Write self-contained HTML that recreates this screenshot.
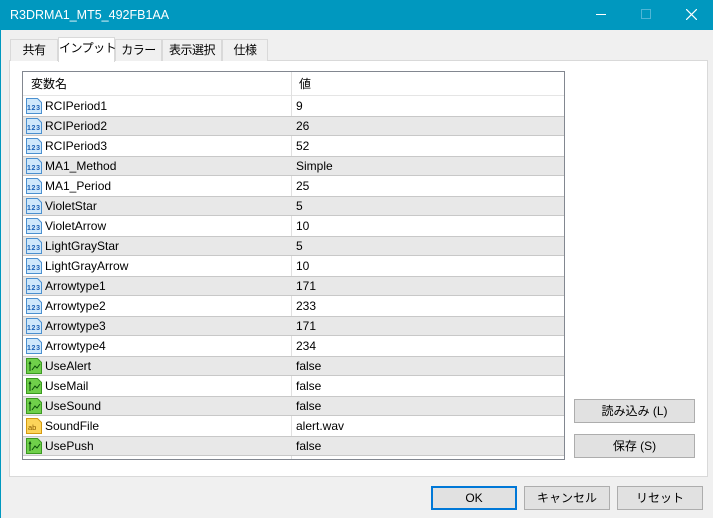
<!DOCTYPE html>
<html><head><meta charset="utf-8"><style>
*{margin:0;padding:0;box-sizing:border-box}
body{width:713px;height:518px;background:#f0f0f0;font-family:"Liberation Sans","Noto Sans CJK JP",sans-serif;font-size:12px;color:#000;position:relative;overflow:hidden;border-left:1px solid #0098bf}
.title{position:absolute;left:0;top:0;width:713px;height:30px;background:#0098bf;color:#fff;font-size:12.5px;line-height:30px;padding-left:9px}
.tab{position:absolute;top:39px;height:22px;border:1px solid #d9d9d9;border-bottom:none;background:#f0f0f0;line-height:20px;text-align:center;white-space:nowrap;letter-spacing:-0.5px}
.tab.sel{top:37px;height:25px;background:#fff;z-index:2}
.panel{position:absolute;left:8px;top:60px;width:699px;height:417px;background:#fff;border:1px solid #d9d9d9}
.list{position:absolute;left:21px;top:71px;width:543px;height:389px;border:1px solid #828790;background:#fff;overflow:hidden}
.row{position:absolute;left:0;width:541px;height:20px;line-height:21px}
.row.g{background:#e8e8e8;border-top:1px solid #c8c8c8;border-bottom:1px solid #c8c8c8;line-height:19px}
.n{position:absolute;left:22px}
.v{position:absolute;left:273px}
.div{position:absolute;left:268px;top:0;width:1px;height:389px;background:#e0e0e0}
.ic{position:absolute;left:3px;top:2px;width:16px;height:16px}
.g .ic{top:1px}
.btn{position:absolute;height:24px;border:1px solid #adadad;background:#e1e1e1;text-align:center;line-height:22px}
</style></head><body>
<div class="title">R3DRMA1_MT5_492FB1AA</div>
<div style="position:absolute;left:595px;top:14px;width:10px;height:1px;background:#fff"></div>
<div style="position:absolute;left:640px;top:9px;width:10px;height:10px;border:1px solid #4fb6d6"></div>
<svg style="position:absolute;left:685px;top:9px" width="11" height="11"><path d="M0 0L11 11M11 0L0 11" stroke="#fff" stroke-width="1.2"/></svg>
<div class="panel"></div>
<div class="tab" style="left:9px;width:48px">共有</div>
<div class="tab sel" style="left:57px;width:57px">インプット</div>
<div class="tab" style="left:114px;width:47px">カラー</div>
<div class="tab" style="left:161px;width:60px">表示選択</div>
<div class="tab" style="left:221px;width:46px">仕様</div>
<div class="list">
<div class="row" style="top:0;height:24px;line-height:24px;border-bottom:1px solid #e5e5e5"><span style="position:absolute;left:8px">変数名</span><span class="v" style="left:276px">値</span></div>
<div class="div"></div>
<div id="rows"></div>
</div>
<div class="btn" style="left:573px;top:399px;width:121px">読み込み (L)</div>
<div class="btn" style="left:573px;top:434px;width:121px">保存 (S)</div>
<div class="btn" style="left:430px;top:486px;width:86px;border:2px solid #0078d7;line-height:20px">OK</div>
<div class="btn" style="left:523px;top:486px;width:86px">キャンセル</div>
<div class="btn" style="left:616px;top:486px;width:86px">リセット</div>
<script>
var d=[["RCIPeriod1","9",0],["RCIPeriod2","26",0],["RCIPeriod3","52",0],["MA1_Method","Simple",0],["MA1_Period","25",0],["VioletStar","5",0],["VioletArrow","10",0],["LightGrayStar","5",0],["LightGrayArrow","10",0],["Arrowtype1","171",0],["Arrowtype2","233",0],["Arrowtype3","171",0],["Arrowtype4","234",0],["UseAlert","false",1],["UseMail","false",1],["UseSound","false",1],["SoundFile","alert.wav",2],["UsePush","false",1]];
var ic=['<svg class="ic" viewBox="0 0 16 16"><path d="M0.5 0.5h11l4 4v11H0.5z" fill="#cfe8fb" stroke="#4a90d0"/><text x="1" y="12" font-size="7" font-weight="bold" fill="#1a5fb4" font-family="Liberation Sans" textLength="13">123</text></svg>',
'<svg class="ic" viewBox="0 0 16 16"><path d="M0.5 0.5h11l4 4v11H0.5z" fill="#6fcf4a" stroke="#3a9a20"/><path d="M4 13V5M3 6l1-2 1 2M6 12l3-4 2 2 3-4" stroke="#0a4a0a" fill="none"/></svg>',
'<svg class="ic" viewBox="0 0 16 16"><path d="M0.5 0.5h11l4 4v11H0.5z" fill="#fcd45a" stroke="#d49a10"/><text x="2" y="12" font-size="7.5" fill="#8a5a00" font-family="Liberation Sans">ab</text></svg>'];
var h='';d.forEach(function(r,i){h+='<div class="row'+(i%2?' g':'')+'" style="top:'+(24+i*20)+'px">'+ic[r[2]]+'<span class="n">'+r[0]+'</span><span class="v">'+r[1]+'</span></div>';});
document.getElementById('rows').innerHTML=h;
</script>
</body></html>
